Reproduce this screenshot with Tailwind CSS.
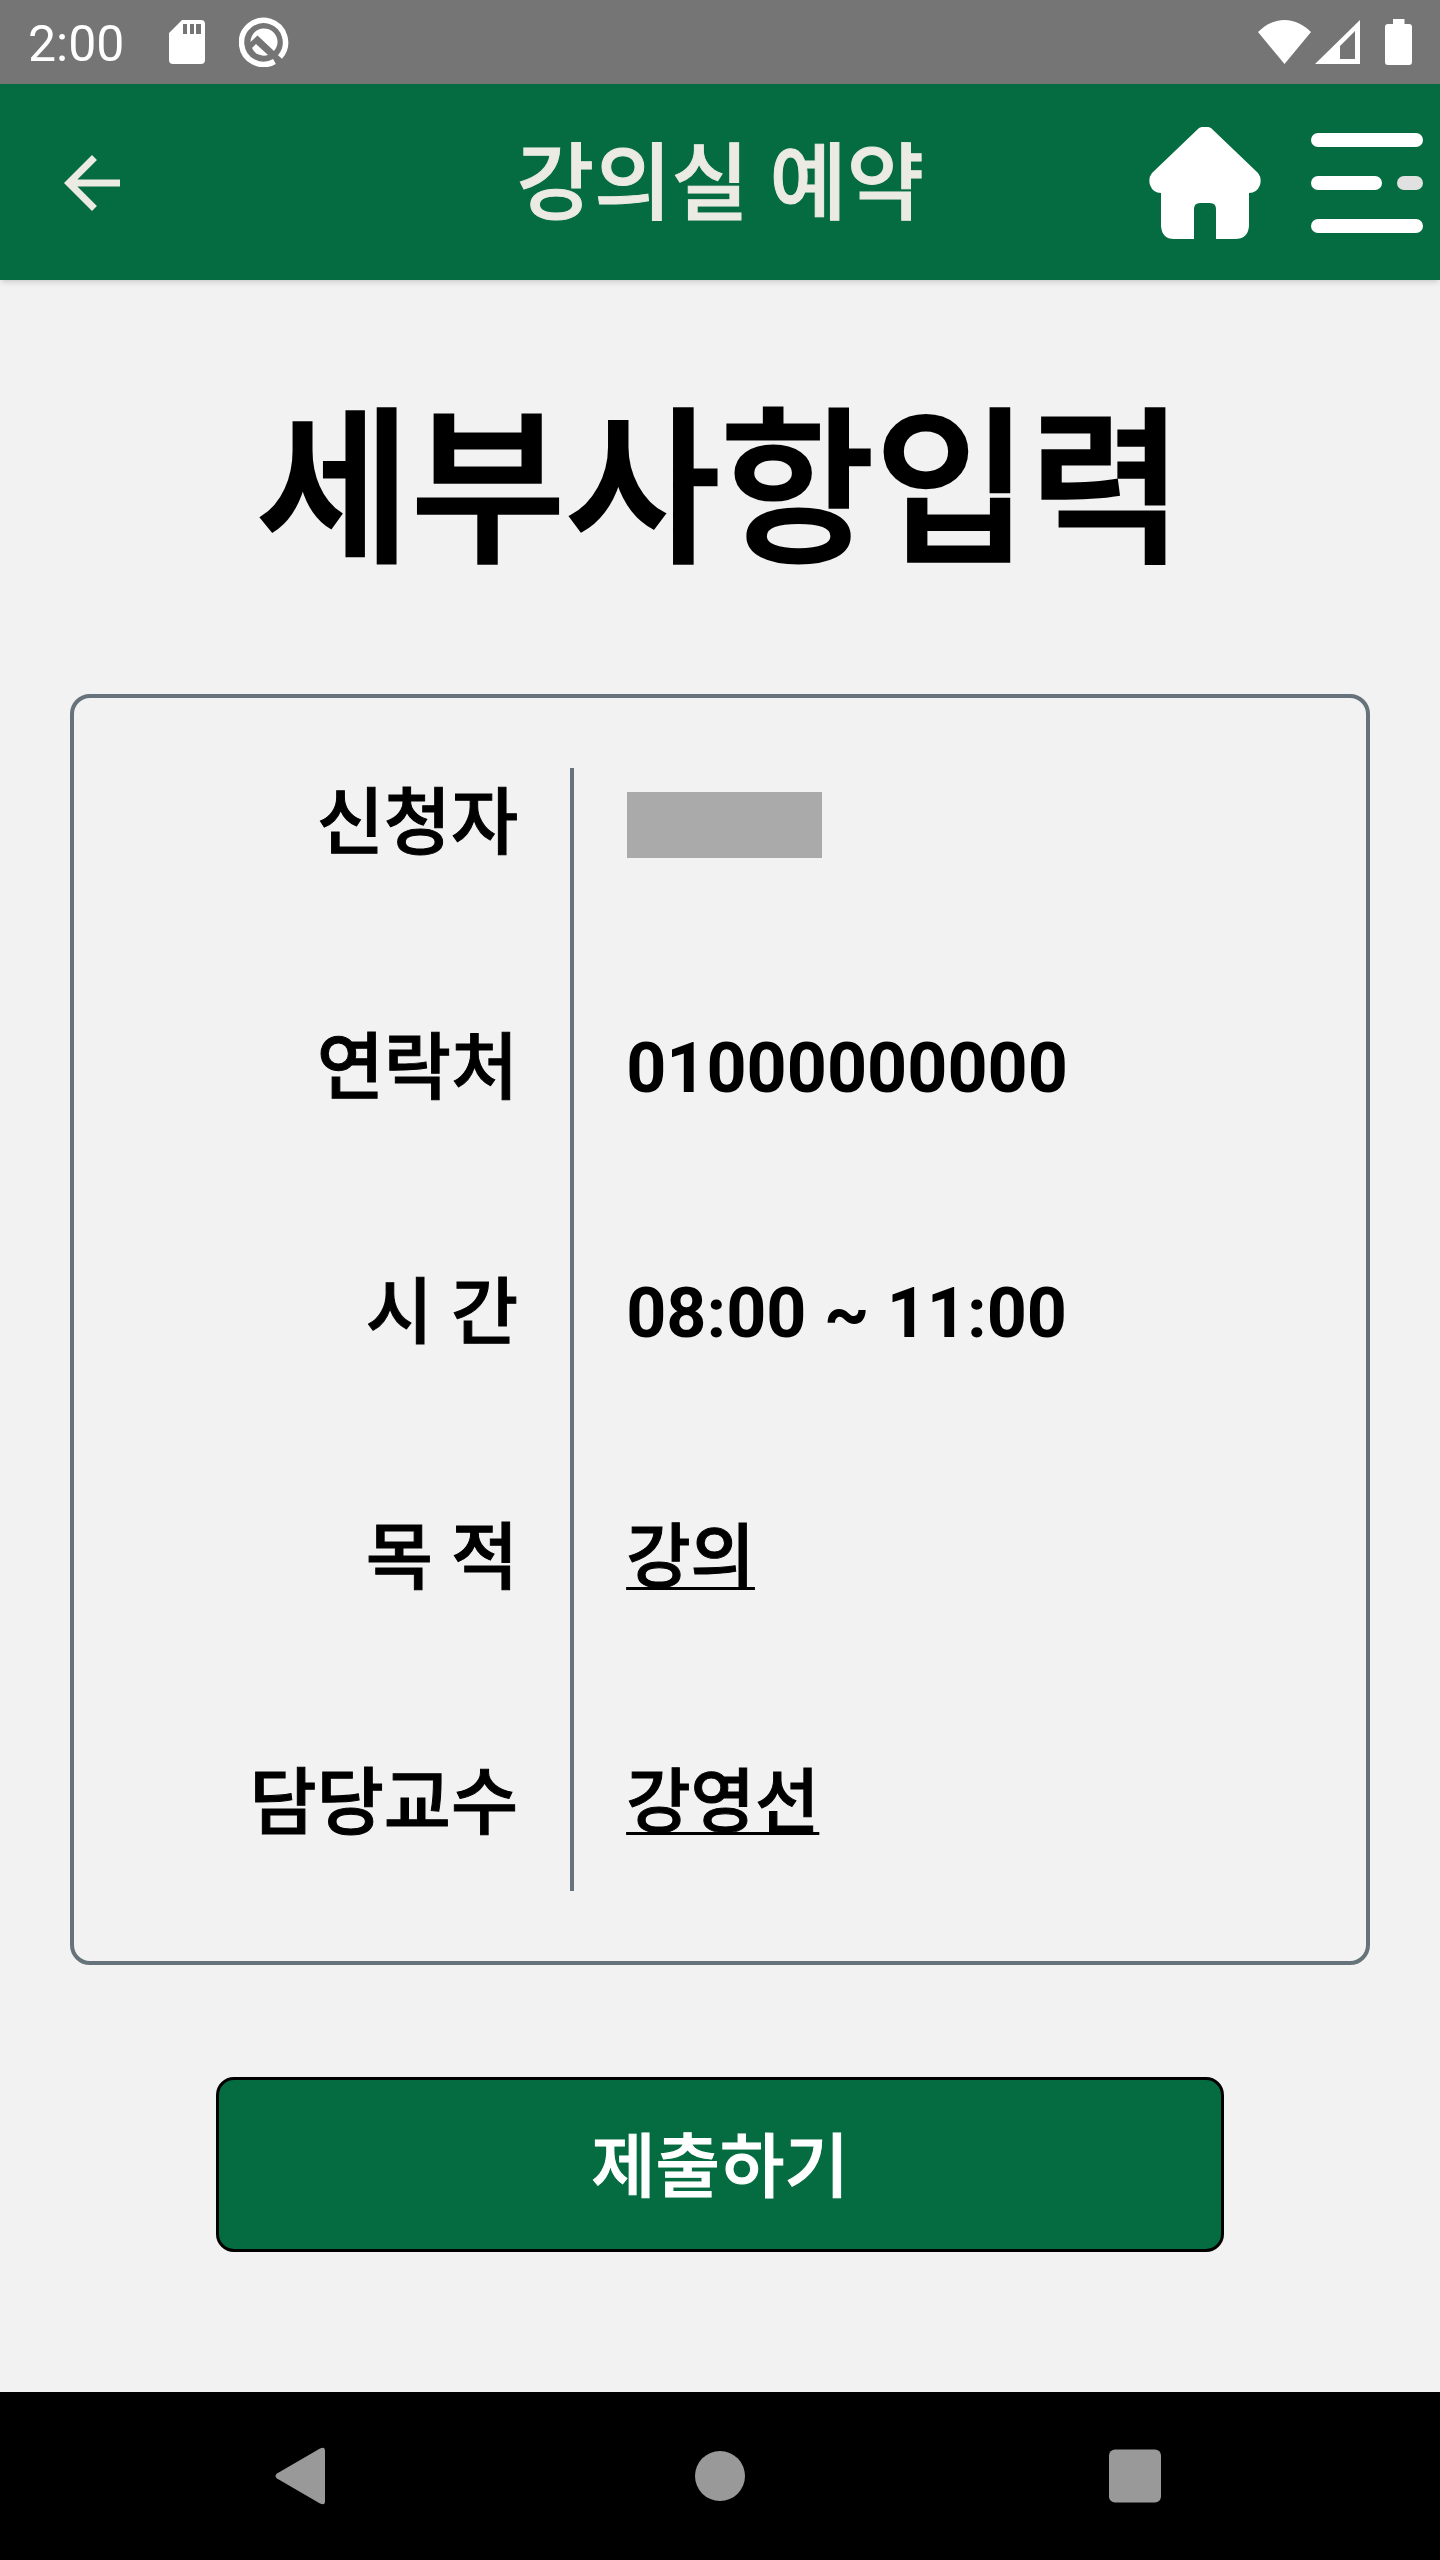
<!DOCTYPE html>
<html lang="ko">
<head>
<meta charset="utf-8">
<meta name="viewport" content="width=device-width, initial-scale=1">
<title>강의실 예약</title>
<script src="https://cdn.jsdelivr.net/npm/@tailwindcss/browser@4"></script>
</head>
<body class="flex min-h-screen flex-col bg-[#f2f2f2] font-['Roboto','Noto_Sans_CJK_KR',sans-serif] text-black">

  <!-- System status bar -->
  <div class="flex h-[84px] items-center justify-between bg-[#757575] pr-7 pl-7 text-white">
    <div class="flex items-center">
      <span class="w-[141px] pt-1 text-[50px] leading-[80px]">2:00</span>
      <svg class="h-11 w-9" viewBox="0 0 36 44" fill="currentColor" aria-hidden="true"><path fill-rule="evenodd" d="M13 0H32a4 4 0 0 1 4 4V40a4 4 0 0 1-4 4H4a4 4 0 0 1-4-4V13ZM14 4v10h4V4ZM21 4v10h4V4ZM27 4v10h5V4Z"/></svg>
      <svg class="ml-[34px] h-[50px] w-[50px]" viewBox="0 0 50 50" fill="none" aria-hidden="true">
        <path d="M35.500 44.500A22 22 0 1 1 41 40" stroke="currentColor" stroke-width="5.500"/>
        <path d="M11.500 25A13.500 13.500 0 1 1 35 34L18.500 18.500Z" fill="currentColor"/>
        <path d="M17 27 29 38A13 13 0 0 1 13 31Z" fill="currentColor"/>
      </svg>
    </div>
    <div class="flex items-center">
      <svg class="h-11 w-[53px]" viewBox="0 0 53 44" fill="currentColor" aria-hidden="true"><path d="M26.500 44 0 12C7 5 16 0 26.500 0S46 5 53 12Z"/></svg>
      <svg class="ml-1 h-11 w-[45px]" viewBox="0 0 45 44" fill="currentColor" aria-hidden="true"><path fill-rule="evenodd" d="M45 0V44H0ZM40 11 25 26V39H40Z"/></svg>
      <svg class="ml-[25px] h-[46px] w-[27px]" viewBox="0 0 27 46" fill="currentColor" aria-hidden="true"><path d="M8 0H19.500V5H24a3 3 0 0 1 3 3V43a3 3 0 0 1-3 3H3a3 3 0 0 1-3-3V8A3 3 0 0 1 3 5H8Z"/></svg>
    </div>
  </div>

  <header class="grid h-[196px] grid-cols-[1fr_auto_1fr] items-center bg-[#046c40] pt-0.5 pr-[17px] pl-[50px] text-[#ebeae3] shadow-md">
    <button type="button" aria-label="뒤로" class="w-[84px]">
      <svg class="h-[84px] w-[84px]" viewBox="0 0 24 24" fill="currentColor"><path d="M20 11H7.830l5.590-5.590L12 4l-8 8 8 8 1.410-1.410L7.830 13H20z"/></svg>
    </button>
    <div class="pt-1 pr-8 text-[84px] leading-[120px] font-medium [-webkit-text-stroke:1px]">강의실 예약</div>
    <div class="flex justify-end gap-[50px] text-white">
      <button type="button" aria-label="홈">
        <svg class="h-28 w-28" viewBox="0 0 112 112" fill="currentColor"><path d="M50 1Q56-2 62 1L109 46Q113 51 111 58Q108 66 100 66V99Q99 112 86 112H67V82Q67 76 61 76H51Q45 76 45 82V112H25Q13 112 12 99V66Q4 66 1 58Q-1 51 3 46Z"/></svg>
      </button>
      <button type="button" aria-label="메뉴">
        <svg class="h-28 w-28" viewBox="0 0 112 112" fill="currentColor"><rect y="6" width="112" height="14" rx="7"/><rect y="49" width="71" height="14" rx="7"/><rect x="86" y="49" width="26" height="14" rx="7" fill="#e1e1e1"/><rect y="92" width="112" height="14" rx="7"/></svg>
      </button>
    </div>
  </header>

  <main class="flex flex-1 flex-col items-center px-[70px]">
    <h1 class="pt-[92px] pb-[82px] text-[168px] leading-[240px] font-medium [-webkit-text-stroke:3px]">세부사항입력</h1>

    <dl class="grid w-full grid-cols-[12fr_19fr] rounded-[20px] border-4 border-[#66737a] py-[70px] text-[70px] leading-[111px] font-medium">
      <dt class="border-r-4 border-[#66737a] pr-[52px] pb-[134px] text-right text-[73px] [-webkit-text-stroke:1px]">신청자</dt>
      <dd class="pt-6 pl-[53px]"><div class="h-[66px] w-[195px] bg-[#aaaaaa]"></div></dd>
      <dt class="border-r-4 border-[#66737a] pr-[52px] pb-[134px] text-right text-[73px] [-webkit-text-stroke:1px]">연락처</dt>
      <dd class="pl-[52px] font-bold">01000000000</dd>
      <dt class="border-r-4 border-[#66737a] pr-[52px] pb-[134px] text-right text-[73px] [-webkit-text-stroke:1px]">시 간</dt>
      <dd class="pl-[52px] font-bold">08:00 ~ 11:00</dd>
      <dt class="border-r-4 border-[#66737a] pr-[52px] pb-[134px] text-right text-[73px] [-webkit-text-stroke:1px]">목 적</dt>
      <dd class="pl-[52px]"><a href="#" class="underline decoration-3 underline-offset-5 [-webkit-text-stroke:1px] [text-decoration-skip-ink:none]">강의</a></dd>
      <dt class="border-r-4 border-[#66737a] pr-[52px] pb-8 text-right text-[73px] [-webkit-text-stroke:1px]">담당교수</dt>
      <dd class="pl-[52px]"><a href="#" class="underline decoration-3 underline-offset-5 [-webkit-text-stroke:1px] [text-decoration-skip-ink:none]">강영선</a></dd>
    </dl>

    <button type="button" class="mt-28 h-[175px] w-[1008px] max-w-full rounded-[18px] border-3 border-black bg-[#046c40] pt-2 text-[70px] leading-[103px] font-medium text-white [-webkit-text-stroke:1px]">제출하기</button>
  </main>

  <!-- System navigation bar -->
  <nav class="grid h-[168px] grid-cols-3 place-items-center bg-black px-[98px] text-[#999999]">
    <button type="button" aria-label="뒤로"><svg class="h-[84px] w-[84px]" viewBox="0 0 84 84" fill="currentColor"><path d="M14 39.500 57 14.500Q62 12 62 17V67Q62 72 57 69.500L14 44.500Q11 42 14 39.500Z"/></svg></button>
    <button type="button" aria-label="홈 화면"><svg class="h-[84px] w-[84px]" viewBox="0 0 84 84" fill="currentColor"><circle cx="42" cy="42" r="25"/></svg></button>
    <button type="button" aria-label="최근 앱"><svg class="h-[84px] w-[84px]" viewBox="0 0 84 84" fill="currentColor"><rect x="16" y="15.500" width="52" height="53" rx="6"/></svg></button>
  </nav>
</body>
</html>
